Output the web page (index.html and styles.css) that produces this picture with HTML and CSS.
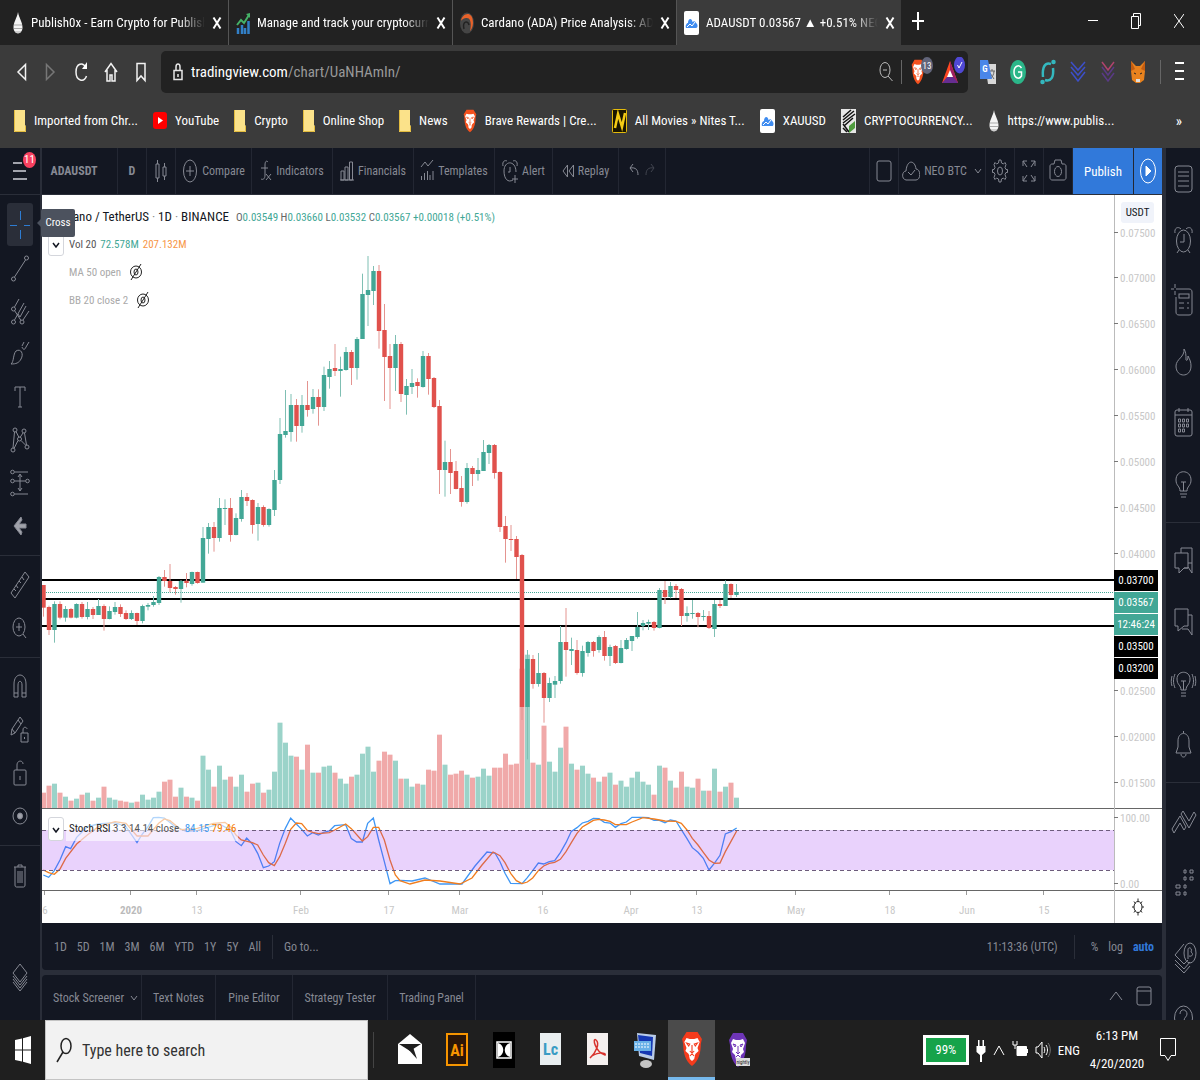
FILE: index.html
```html
<!DOCTYPE html>
<html lang="en">
<head>
  <meta charset="UTF-8" />
  <meta name="viewport" content="width=device-width, initial-scale=1.0" />
  <title>ADAUSDT 0.03567 ▲ +0.51% NEO BTC</title>
  <link rel="stylesheet" href="styles.css">
</head>
<body>
  <!-- shared symbols -->
  <svg class="defs" width="0" height="0" aria-hidden="true">
    <symbol id="drop" viewBox="0 0 10 24"><path d="M5 1C4 7 .5 11 .5 16.500a4.500 6 0 0 0 9 0C9.500 11 6 7 5 1z" fill="#f4f4f4"/><path d="M1 14h8M.8 17.500h8.400M2 21h6" stroke="#aaa" stroke-width="1"/></symbol>
    <symbol id="folder" viewBox="0 0 12 22"><path d="M0 0h11v15l1 1v6H0z" fill="#fbe28a"/><path d="M.5 0v21.500h11V16" fill="none" stroke="#e3bc3f"/></symbol>
    <symbol id="tv" viewBox="0 0 15 24"><rect width="15" height="24" rx="2" fill="#fff"/><path d="M2 17c-1-3 1-5 2-5 0-5 4-5 4.500-1 2-2 3.500 0 3.500 1 2 1 2 5 0 5z" fill="#3f8cf0"/><path d="M3 16l3-3 2 2 3-4" fill="none" stroke="#fff" stroke-width="1"/></symbol>
    <symbol id="lion" viewBox="0 0 20 36" preserveAspectRatio="none"><path d="M5 1h10l4 7-1 5c0 9-2 17-8 22C4 30 2 22 2 13L1 8z"/><path d="M5 7l3 1h4l3-1 2 4-2 6 1 3-3 3-1 5-2 2-2-2-1-5-3-3 1-3-2-6z" fill="#fff"/><path d="M5 12l3 1-1 2zM15 12l-3 1 1 2zM8 20l2 2 2-2M10 14v7M8 25l2-2 2 2" fill="none" stroke="currentColor" stroke-width="1"/></symbol>
    <symbol id="close" viewBox="0 0 10 14"><path d="M1.500 1.500l7 11M8.500 1.500l-7 11" stroke="#fff" stroke-width="2"/></symbol>
    <symbol id="hidden-eye" viewBox="0 0 14 16"><ellipse cx="7" cy="8" rx="5.500" ry="6"/><ellipse cx="7" cy="8" rx="2" ry="3"/><path d="M12 0L2 16"/></symbol>
    <symbol id="chev" viewBox="0 0 8 6"><path d="M1 1l3 4 3-4"/></symbol>
  </svg>

  <header class="browser">
    <div class="tabs">
      <div class="tab"><svg width="12" height="24"><use href="#drop"/></svg><span class="tab-title">Publish0x - Earn Crypto for Publish</span><button class="tab-close" aria-label="Close tab"><svg width="10" height="14"><use href="#close"/></svg></button></div>
      <div class="tab"><svg width="14" height="22" viewBox="0 0 14 22"><path d="M2 22v-6M6 22v-9M9 22v-6M12.500 22V9" stroke="#3280c8" stroke-width="2.500"/><path d="M1 13l4-5 3 3 5-8" fill="none" stroke="#45b267" stroke-width="2"/><path d="M10 2l4-1v5" fill="#45b267"/></svg><span class="tab-title">Manage and track your cryptocurr</span><button class="tab-close" aria-label="Close tab"><svg width="10" height="14"><use href="#close"/></svg></button></div>
      <div class="tab"><svg width="14" height="22" viewBox="0 0 14 22"><ellipse cx="7" cy="11" rx="7" ry="10.500" fill="#454545"/><path d="M1 9C2 1 13-2 13 11c0 4-2 7-3 8 1-4 2-14-4-13C3 6 1 9 1 9z" fill="#e8622a"/><path d="M4 17c-2-8 4-9 5-4" fill="none" stroke="#222" stroke-width="1.500"/></svg><span class="tab-title">Cardano (ADA) Price Analysis: ADA</span><button class="tab-close" aria-label="Close tab"><svg width="10" height="14"><use href="#close"/></svg></button></div>
      <div class="tab tab-active"><svg width="15" height="24"><use href="#tv"/></svg><span class="tab-title">ADAUSDT 0.03567 ▲ +0.51% NEO</span><button class="tab-close" aria-label="Close tab"><svg width="10" height="14"><use href="#close"/></svg></button></div>
      <button class="new-tab" aria-label="New tab"><svg width="12" height="18" viewBox="0 0 12 18"><path d="M6 0v18M0 9h12" stroke="#fff" stroke-width="2"/></svg></button>
      <div class="window-buttons">
        <button aria-label="Minimize"><svg width="10" height="16" viewBox="0 0 10 16"><path d="M0 7.500h10" stroke="#fff"/></svg></button>
        <button aria-label="Restore"><svg width="10" height="16" viewBox="0 0 10 16"><path d="M.5 3.500h7v12h-7zM2.500 3V.5h7v12H8" fill="none" stroke="#fff"/></svg></button>
        <button aria-label="Close"><svg width="10" height="16" viewBox="0 0 10 16"><path d="M0 1l10 14M10 1L0 15" stroke="#fff"/></svg></button>
      </div>
    </div>

    <div class="nav">
      <button aria-label="Back"><svg width="14" height="22" viewBox="0 0 14 22"><path d="M11.500 3.500v15L4 11z"/></svg></button>
      <button class="dim" aria-label="Forward"><svg width="14" height="22" viewBox="0 0 14 22"><path d="M2.500 3.500v15L10 11z"/></svg></button>
      <button aria-label="Reload"><svg width="14" height="22" viewBox="0 0 14 22"><path d="M11.500 6C9 1 2 2 2 11s8 11 10.500 4"/><path d="M13 1v7H8z" fill="#fff" stroke="none"/></svg></button>
      <button aria-label="Home"><svg width="14" height="22" viewBox="0 0 14 22"><path d="M1 11l6-8.500L13 11M3 9v11h3v-6h2v6h3V9"/></svg></button>
      <button aria-label="Bookmark"><svg width="14" height="22" viewBox="0 0 14 22"><path d="M3 2.500h8v17L7 15l-4 4.500z"/></svg></button>
      <div class="address">
        <svg width="10" height="18" viewBox="0 0 10 18" fill="none" stroke="#e6e6e6" stroke-width="1.500"><path d="M1 7.500h8v9H1zM3 7V4c0-4 4-4 4 0v3M5 11v3"/></svg>
        <span class="url">tradingview.com<em>/chart/UaNHAmIn/</em></span>
        <svg width="14" height="22" viewBox="0 0 14 22" fill="none" stroke="#bbb"><ellipse cx="6" cy="9" rx="5" ry="7.500"/><path d="M9 15l4.500 5M4 9h4"/></svg>
        <i class="bar"></i>
        <svg width="24" height="30" viewBox="0 0 24 30"><g fill="#f4511e" color="#f4511e"><use href="#lion" x="1" y="2" width="14" height="26"/></g><ellipse cx="17" cy="8.500" rx="6" ry="8.500" fill="#62657a"/><text x="17" y="12" class="badge-text">13</text></svg>
        <svg width="24" height="30" viewBox="0 0 24 30"><path d="M8 4L0 26h16z" fill="#ff4724"/><path d="M0 26h16l-3-6H5z" fill="#662d91"/><path d="M8 4l8 22-8-10z" fill="#9e1f63"/><path d="M8 13l-3 7h6z" fill="#fff"/><ellipse cx="17.500" cy="8" rx="5.500" ry="8.500" fill="#5048d5"/><path d="M15.500 8l1.500 3 3-6" fill="none" stroke="#fff"/></svg>
      </div>
      <div class="extensions">
        <svg width="16" height="26" viewBox="0 0 16 26"><path d="M5 5h11v20H8z" fill="#d8d8d8"/><path d="M9 12h6M12 10v2M14 12c0 4-2 6-4 8M10 14l4 6" stroke="#666" fill="none"/><path d="M0 1h8l4 19H0z" fill="#4a86e8"/><text x="5" y="13" class="ext-text">G</text></svg>
        <svg width="16" height="26" viewBox="0 0 16 26"><ellipse cx="8" cy="13" rx="8" ry="12" fill="#2bb689"/><path d="M11.500 9C9 5 4 7 4 13s5 8 7.500 4v-4H8" fill="none" stroke="#fff" stroke-width="1.500"/></svg>
        <svg width="16" height="26" viewBox="0 0 16 26" fill="none" stroke="#34b8bf" stroke-width="2.500"><path d="M11 5C5 3 2 8 3 18M5 21c6 2 9-3 8-12"/><circle cx="13.500" cy="3" r="1" fill="#34b8bf"/><circle cx="2.500" cy="23" r="1" fill="#34b8bf"/></svg>
        <svg width="16" height="26" viewBox="0 0 16 26" fill="none" stroke="#3d4fc9" stroke-width="1.500"><path d="M1 3l7 8 7-8M1 8l7 8 7-8M1 13l7 9 7-9"/></svg>
        <svg width="16" height="26" viewBox="0 0 16 26" fill="none" stroke-width="1.500"><path d="M2 3l6 8 6-8" stroke="#b0436d"/><path d="M2 8l6 8 6-8M2 14l6 8 6-8" stroke="#5a3a86"/></svg>
        <svg width="16" height="26" viewBox="0 0 16 26"><path d="M1 2l5 5h4l5-5v10l-1 9-4 3H6l-4-3-1-9z" fill="#e8821e"/><path d="M1 2l4 8-4 2zM15 2l-4 8 4 2z" fill="#c25c12"/><path d="M4 14l2 1M12 14l-2 1" stroke="#222"/><path d="M6 20h4v3H6z" fill="#ddd"/></svg>
        <i class="bar"></i>
        <button class="menu" aria-label="Menu"><svg width="9" height="20" viewBox="0 0 9 20"><path d="M0 2h9M0 10h9M0 18h9" stroke="#fff" stroke-width="2"/></svg></button>
      </div>
    </div>

    <nav class="bookmarks">
      <a href="#"><svg width="12" height="22"><use href="#folder"/></svg>Imported from Chr...</a>
      <a href="#"><svg width="14" height="18" viewBox="0 0 14 18"><rect width="14" height="17" rx="3" fill="#f00"/><path d="M5 5l5 3.500L5 12z" fill="#fff"/></svg>YouTube</a>
      <a href="#"><svg width="12" height="22"><use href="#folder"/></svg>Crypto</a>
      <a href="#"><svg width="12" height="22"><use href="#folder"/></svg>Online Shop</a>
      <a href="#"><svg width="12" height="22"><use href="#folder"/></svg>News</a>
      <a href="#"><svg class="orange" width="14" height="24"><use href="#lion"/></svg>Brave Rewards | Cre...</a>
      <a href="#"><svg width="15" height="24" viewBox="0 0 15 24"><rect x=".5" y=".5" width="14" height="23" rx="1" fill="#191500" stroke="#e4bb0b"/><path d="M3 19L6 5l4 13 3-14" fill="none" stroke="#f4cb15" stroke-width="2.500"/></svg>All Movies » Nites T...</a>
      <a href="#"><svg width="15" height="24"><use href="#tv"/></svg>XAUUSD</a>
      <a href="#"><svg width="15" height="24" viewBox="0 0 15 24"><rect width="15" height="24" fill="#e6e6e6"/><path d="M2 8l8-7M2 11l11-9M2 14l12-9M3 17l9-8M2 15l6 8M2 19l4 4" stroke="#111" stroke-width="1.500"/><path d="M8 17l6-5v7l-6 5z" fill="#4f9b3e"/></svg>CRYPTOCURRENCY...</a>
      <a href="#"><svg width="12" height="24"><use href="#drop"/></svg>https://www.publis...</a>
      <button class="more" aria-label="More bookmarks">»</button>
    </nav>
  </header>

  <main class="app">
    <aside class="tools">
      <button class="main-menu" aria-label="Main menu"><svg width="16" height="20" viewBox="0 0 16 20"><path d="M1 2h9M1 10h13M1 18h14" stroke="#a2a4ad" stroke-width="2"/></svg><span class="count">11</span></button>
      <div class="tool-list">
        <button class="selected" aria-label="Cross"><svg class="blue" viewBox="0 0 20 30"><path d="M10.500 1v9M10.500 20v9M0 15.500h7M14 15.500h6"/></svg></button>
        <button aria-label="Trend line"><svg viewBox="0 0 20 30"><circle cx="3.500" cy="26" r="2"/><circle cx="16.500" cy="5" r="2"/><path d="M4.500 24l11-17"/></svg></button>
        <button aria-label="Pitchfork"><svg viewBox="0 0 20 30"><circle cx="3.500" cy="13" r="2"/><circle cx="3.500" cy="26" r="2"/><circle cx="12" cy="26" r="2"/><path d="M4.500 11L9 3M4.500 14.500l6.500 10M4.500 24L14 7M8 18l2 3 6-11M13 24l6-9"/></svg></button>
        <button aria-label="Brush"><svg viewBox="0 0 20 30"><path d="M1 25c3-2 2-10 5-13 5-3 8 3 5 8-2 4-5 5-10 5zM12 8c1 3 3 3 4 0l3-5M14 3l-2 4"/></svg></button>
        <button aria-label="Text"><svg viewBox="0 0 20 30"><path d="M5 9V5h10v4M10 5v20M8 25h4"/></svg></button>
        <button aria-label="Patterns"><svg viewBox="0 0 20 30"><circle cx="5" cy="5" r="2"/><circle cx="14" cy="6" r="2"/><circle cx="9.500" cy="14" r="2"/><circle cx="3" cy="25" r="2"/><circle cx="17" cy="22" r="2"/><path d="M4.500 7L3 23M6 6.500l3 6M13 8l-3 4.500M14.500 8l2 12M8 15.500L4 23.500M11 15.500l5 5"/></svg></button>
        <button aria-label="Prediction"><svg viewBox="0 0 20 30"><circle cx="2.500" cy="4" r="1.800"/><circle cx="2.500" cy="13" r="1.800"/><circle cx="17.500" cy="13" r="1.800"/><circle cx="2.500" cy="26" r="1.800"/><path d="M4.500 4H18M4.500 13h11M4.500 26H18M10 7v16M8 9l2-3 2 3M8 20l2 3 2-3"/></svg></button>
        <button aria-label="Arrow"><svg class="solid" viewBox="0 0 20 30"><path d="M4 15l7-9 1 3-3 4h7v4H9l3 4-1 3z"/></svg></button>
        <hr>
        <button aria-label="Measure"><svg viewBox="0 0 20 30"><path d="M1 23L15 2l4 5L5 28zM4 19l2 2M6 15l2 3M9 11l2 2M12 7l2 3"/></svg></button>
        <button aria-label="Zoom in"><svg viewBox="0 0 20 30"><ellipse cx="9" cy="14" rx="6" ry="9"/><path d="M13 21l3 4M6 14h6M9 10v8"/></svg></button>
        <hr>
        <button aria-label="Magnet"><svg viewBox="0 0 20 30"><path d="M4 25V12c0-12 12-12 12 0v13h-4V13c0-5-4-5-4 0v12zM4 21h4M12 21h4"/></svg></button>
        <button aria-label="Stay in drawing mode"><svg viewBox="0 0 20 30"><path d="M1 20L2 14 10 2l3 4L5 18zM8 5l3 4M2 14l3 4M11 18h7v9h-7zM13 18v-3c0-4 4-3 4-1M14.500 22v2"/></svg></button>
        <button aria-label="Lock drawings"><svg viewBox="0 0 20 30"><rect x="4" y="12" width="12" height="15" rx="1"/><path d="M7 12V7c0-5 6-5 6-1M10 18v4"/></svg></button>
        <button aria-label="Hide drawings"><svg viewBox="0 0 20 30"><ellipse cx="10" cy="15" rx="7" ry="8"/><ellipse class="dot" cx="10" cy="15" rx="2.500" ry="3"/></svg></button>
        <hr>
        <button aria-label="Remove drawings"><svg viewBox="0 0 20 30"><path d="M4 7h12M8 7V5h4v2M5 7v18c0 2 1 2 2 2h6c1 0 2 0 2-2V7M8 11v12M10 11v12M12 11v12"/></svg></button>
        <button class="object-tree" aria-label="Object tree"><svg viewBox="0 0 20 30"><path d="M10 2l7 9-7 9-7-9zM3 14l7 9 7-9M3 17l7 9 7-9M3 20l7 9 7-9"/></svg></button>
      </div>
    </aside>

    <section class="center">
      <div class="topbar">
        <button class="w-symbol"><b>ADAUSDT</b></button>
        <button class="w-icon"><b>D</b></button>
        <button class="w-icon" aria-label="Candles"><svg width="12" height="26" viewBox="0 0 12 26"><path d="M1 6h3v14H1zM2.500 2v4M2.500 20v4M8 9h3v9H8zM9.500 5v4M9.500 18v4"/></svg></button>
        <button class="w-compare"><svg width="16" height="26" viewBox="0 0 16 26"><ellipse cx="8" cy="13" rx="6.500" ry="11"/><path d="M8 8v10M4 13h8"/></svg>Compare</button>
        <button class="w-tool"><svg width="12" height="26" viewBox="0 0 12 26"><path d="M8 4C6 2 5 4 5 7v10c0 4-2 5-4 4M1 10h7M6 16l5 6M11 16l-5 6"/></svg>Indicators</button>
        <button class="w-tool"><svg width="14" height="26" viewBox="0 0 14 26"><path d="M1 22v-9h3v9zM5 22V9h3v13zM9.500 22V4h3v18zM0 22h14"/></svg>Financials</button>
        <button class="w-tool"><svg width="14" height="26" viewBox="0 0 14 26"><path d="M1 9l4-5 3 4 5-6M1.500 22v-4M4.500 22v-7M7.500 22v-9M10 22v-5M13 22v-9"/></svg>Templates</button>
        <button class="w-alert"><svg width="16" height="26" viewBox="0 0 16 26"><path d="M11 22c-5 3-9-1-9-9 0-11 12-11 12 1M1 8c-1-5 2-6 4-5M15 8c1-5-2-6-4-5M8 9v5H6M10 21h6M13 17v8"/></svg>Alert</button>
        <button class="w-replay"><svg width="12" height="26" viewBox="0 0 12 26"><path d="M5.500 7v12L1 13zM11.500 7v12L7 13z"/></svg>Replay</button>
        <div class="w-undo"><button aria-label="Undo"><svg width="12" height="20" viewBox="0 0 12 20"><path d="M5 4L2 8l3 4M2 8c6-1 8 2 8 7"/></svg></button><button class="off" aria-label="Redo"><svg width="12" height="20" viewBox="0 0 12 20"><path d="M7 4l3 4-3 4M10 8c-6-1-8 2-8 7"/></svg></button></div>
        <span class="fill"></span>
        <button class="w-icon" aria-label="Layout"><svg width="16" height="22" viewBox="0 0 16 22"><rect x="1" y="1" width="14" height="20" rx="2"/></svg></button>
        <button class="w-layout"><svg width="18" height="22" viewBox="0 0 18 22"><path d="M4 20C-1 19 0 11 4 11 5-1 13 0 14 9c5 0 5 11 0 11zM6 12l3 3 4-5"/></svg>NEO BTC<svg class="caret" width="8" height="6"><use href="#chev"/></svg></button>
        <button class="w-icon" aria-label="Settings"><svg width="16" height="26" viewBox="0 0 16 26"><path d="M6.500 5L7 2h2l.5 3 2 1L13 4.500l1 2-1 3 1 2h1.500v3H14l-1 2 1 3-1 2-1.500-1.500-2 1L9 24H7l-.5-3-2-1L3 21.500l-1-2 1-3-1-2H.5v-3H2l1-2-1-3 1-2L4.500 6z"/><ellipse cx="8" cy="13" rx="2.500" ry="4"/></svg></button>
        <button class="w-icon" aria-label="Fullscreen"><svg width="14" height="22" viewBox="0 0 14 22"><path d="M1 6V1h4M1 1l4 6M13 6V1H9M13 1L9 7M1 16v5h4M1 21l4-6M13 16v5H9M13 21l-4-6"/></svg></button>
        <button class="w-icon" aria-label="Snapshot"><svg width="18" height="24" viewBox="0 0 18 24"><path d="M3 5h2l1-4h6l1 4h2c1 0 2 1 2 2v12c0 1-1 2-2 2H3c-1 0-2-1-2-2V7c0-1 1-2 2-2z"/><ellipse cx="9" cy="12.500" rx="3.500" ry="5"/></svg></button>
        <button class="publish">Publish</button>
        <button class="play" aria-label="Go live"><svg width="18" height="26" viewBox="0 0 18 26"><ellipse cx="9" cy="13" rx="7.500" ry="12"/><path d="M7 8l5 5-5 5z" fill="#fff"/></svg></button>
      </div>

      <div class="chart">
        <svg id="plot" width="1120" height="728" viewBox="42 195 1120 728">
          <g id="volume"></g>
          <g stroke="#000" stroke-width="2"><path d="M42 580h1072M42 599h1072M42 626h1072"/></g>
          <path d="M42 592.500h1072" stroke="#42a796" stroke-dasharray="1 1"/>
          <g id="candles"></g>
          <g id="stoch" fill="none" stroke-width="1.300"></g>
          <rect x="42" y="830" width="1072" height="40" fill="rgba(145, 30, 240, .2)"/>
          <path d="M42 830.500h1072M42 870.500h1072" stroke="#6d5c7c" stroke-dasharray="4 3"/>
          <path d="M42 808.500h1120M42 890.500h1120" stroke="#666"/>
          <path d="M1114.500 195v728" stroke="#bbb"/>
          <g id="axis"></g>
        </svg>

        <div class="legend">
          <div class="legend-title">Cardano / TetherUS <i>·</i> 1D <i>·</i> BINANCE
            <span class="ohlc">O<b>0.03549</b> H<b>0.03660</b> L<b>0.03532</b> C<b>0.03567</b> <b>+0.00018 (+0.51%)</b></span>
          </div>
          <div class="legend-row">Vol 20 <span class="green">72.578M</span> <span class="orange-text">207.132M</span></div>
          <div class="legend-row faded">MA 50 open <svg width="14" height="16"><use href="#hidden-eye"/></svg></div>
          <div class="legend-row faded">BB 20 close 2 <svg width="14" height="16"><use href="#hidden-eye"/></svg></div>
        </div>
        <button class="fold fold-top" aria-label="Collapse"><svg width="8" height="6"><use href="#chev"/></svg></button>
        <div class="stoch-legend">
          <button class="fold" aria-label="Collapse"><svg width="8" height="6"><use href="#chev"/></svg></button>
          <div class="stoch-label">Stoch RSI <span class="grey">3 3 14 14 close</span> <span class="k">84.15</span> <span class="d">79.46</span></div>
        </div>
        <div class="price-tags">
          <span>0.03700</span><span class="now">0.03567</span><span class="now">12:46:24</span><span>0.03500</span><span>0.03200</span>
        </div>
        <button class="currency">USDT</button>
        <button class="axis-settings" aria-label="Axis settings"><svg width="14" height="20" viewBox="0 0 14 20"><ellipse cx="7" cy="10" rx="4" ry="5.500"/><path d="M7 1.500v3M7 15.500v3M1 10h2M11 10h2M3 4.500l1.500 2M11 4.500l-1.500 2M3 15.500l1.500-2M11 15.500l-1.500-2"/></svg></button>
      </div>

      <div class="ranges">
        <button>1D</button><button>5D</button><button>1M</button><button>3M</button><button>6M</button><button>YTD</button><button>1Y</button><button>5Y</button><button>All</button>
        <i class="bar"></i>
        <button>Go to...</button>
        <span class="fill"></span>
        <button>11:13:36 (UTC)</button>
        <i class="bar bar-wide"></i>
        <button>%</button><button>log</button><button class="auto">auto</button>
      </div>

      <div class="panels">
        <button class="p-first">Stock Screener <svg class="caret" width="8" height="6"><use href="#chev"/></svg></button>
        <button class="p-notes">Text Notes</button>
        <button class="p-pine">Pine Editor</button>
        <button class="p-tester">Strategy Tester</button>
        <button class="p-trading">Trading Panel</button>
        <span class="fill"></span>
        <button class="p-icon" aria-label="Open panel"><svg width="14" height="20" viewBox="0 0 14 20"><path d="M1 14l6-8 6 8"/></svg></button>
        <button class="p-icon" aria-label="Maximize panel"><svg width="16" height="20" viewBox="0 0 16 20"><rect x="1" y="1" width="14" height="18" rx="2"/><path d="M1 5h14"/></svg></button>
      </div>
    </section>

    <aside class="widgets">
      <button aria-label="Watchlist"><svg viewBox="0 0 24 32"><rect x="4" y="3" width="17" height="26" rx="3"/><path d="M7 9h11M7 13h11M7 18h11M7 23h11"/></svg></button>
      <button aria-label="Alerts"><svg viewBox="0 0 24 32"><ellipse cx="12.500" cy="17" rx="7" ry="11"/><path d="M13 10v8H9M4 9c-1-5 3-7 6-4M21 9c1-5-3-7-6-4M8 26l-2 3M17 26l2 3"/></svg></button>
      <button aria-label="Data window"><svg viewBox="0 0 24 32"><path d="M5 12v15c0 2 1 3 3 3h10c2 0 3-1 3-3V7c0-2-1-3-3-3H8M4-1v4M4 6v4M0 4h3M5 4h3"/><rect x="8" y="9" width="10" height="4"/><path d="M8 18h5M8 23h5M16 18h2M16 23h2"/></svg></button>
      <button aria-label="Hotlist"><svg viewBox="0 0 24 32"><path d="M13 3c1 8-8 10-8 17 0 12 15 12 15 0 0-4-1-6-3-10 0 4-1 5-2 4 0-5 0-8-2-11z"/></svg></button>
      <button aria-label="Calendar"><svg viewBox="0 0 24 32"><rect x="4" y="3" width="17" height="26" rx="2"/><path d="M4 8h17M8 1v4M17 1v4"/><path d="M7.500 12h2v3h-2zM11.500 12h2v3h-2zM15.500 12h2v3h-2zM7.500 17h2v3h-2zM11.500 17h2v3h-2zM15.500 17h2v3h-2zM7.500 22h2v3h-2zM11.500 22h2v3h-2z"/></svg></button>
      <button aria-label="Ideas"><svg viewBox="0 0 24 32"><path d="M9 23c0-5-4-5-4-11 0-11 15-11 15 0 0 6-4 6-4 11zM9 26h7M10 29h5M10 14h5M12.500 14v9"/></svg></button>
      <hr>
      <button aria-label="Public chats"><svg viewBox="0 0 24 32"><path d="M4 8h13v15h-4l-5 5v-5H4zM10 8V3h11v15h-4M17 23h-4M17 22l4 6V18"/></svg></button>
      <button aria-label="Private chats"><svg viewBox="0 0 24 32"><path d="M4 3h13v17h-4l-6 5v-5H4zM17 9h4v20l-4-6h-6"/></svg></button>
      <button aria-label="Ideas stream"><svg viewBox="0 0 24 32"><path d="M10 23c0-5-4-5-4-11 0-9 13-9 13 0 0 6-4 6-4 11zM10 26h5M10 29h5M10 14h5M12.500 14v9M4 7c-2 5-2 9 0 14M1 9c-1 4-1 7 0 10M21 7c2 5 2 9 0 14M24 9c1 4 1 7 0 10"/></svg></button>
      <button aria-label="Notifications"><svg viewBox="0 0 24 32"><path d="M5 25h15l-2-6v-6c0-10-11-10-11 0v6zM10 26c0 4 5 4 5 0M12.500 5V3"/></svg></button>
      <hr>
      <button aria-label="Order panel"><svg viewBox="0 0 24 32"><path d="M1 24L9 11l6 11-2 3-4-7-6 10zM10 9l2-3 6 10 5-9 2 3-7 13z"/></svg></button>
      <button aria-label="DOM"><svg viewBox="0 0 24 32"><path d="M13 4h2v3h-2zM19 4h3v3h-3zM13 11h2v3h-2zM19 11h3v3h-3zM5 19h4v3H5zM13 19h2v3h-2zM5 26h4v3H5zM13 26h2v3h-2z"/></svg></button>
      <button class="beta" aria-label="Object tree"><svg viewBox="0 0 24 32"><path d="M13 3L4 14l9 9 4-4M4 19l9 9 6-7M4 23l9 9 6-7"/><ellipse cx="19" cy="12" rx="6" ry="10"/><path d="M17 18V9c0-4 5-2 3 2 3 2 1 5-2 4"/></svg></button>
      <button aria-label="Help"><svg viewBox="0 0 24 32"><ellipse cx="12.500" cy="16" rx="9" ry="12"/><path d="M9 12c0-6 7-5 7 0 0 3-3 3-3 7M13 22v2"/></svg></button>
    </aside>
  </main>

  <footer class="taskbar">
    <button class="start" aria-label="Start"><svg width="16" height="28" viewBox="0 0 16 28" fill="#fff"><path d="M0 4l7-1.500v11H0zM8 2.200L16 0v13.500H8zM0 14.500h7v11L0 24zM8 14.500h8V28l-8-2.200z"/></svg></button>
    <label class="search"><svg width="16" height="26" viewBox="0 0 16 26" fill="none" stroke="#222" stroke-width="1.500"><ellipse cx="10" cy="9" rx="5" ry="7.500"/><path d="M7 15L1 25"/></svg><input type="text" placeholder="Type here to search" aria-label="Type here to search"></label>
    <i class="bar"></i>
    <div class="apps">
      <button aria-label="Mail"><svg width="24" height="36" viewBox="0 0 24 36"><path d="M0 12L12 2l12 10v20H0z" fill="#fff"/><path d="M1 12h22L12 19z" fill="#1f1f1f"/><path d="M10 17l9 10-4-12z" fill="#1f1f1f"/></svg></button>
      <button aria-label="Illustrator"><svg width="22" height="34" viewBox="0 0 22 34"><rect x="1" y="1" width="20" height="31" fill="#2b1608" stroke="#f79500" stroke-width="2"/><text x="11" y="23" class="ai-text">Ai</text></svg></button>
      <button aria-label="Dolby"><svg width="22" height="36" viewBox="0 0 22 36"><path d="M0 0h22v36H0z"/><path d="M4 10h14v16H4z" fill="none" stroke="#fff" stroke-width="1.500"/><path d="M5 11c7 2 7 12 0 14zM17 11c-7 2-7 12 0 14z" fill="#fff"/></svg></button>
      <button aria-label="LiveCode"><svg width="22" height="34" viewBox="0 0 22 34"><path d="M0 0h21v32H0z" fill="#e9eef0"/><text x="10.500" y="22" class="lc-text">Lc</text></svg></button>
      <button aria-label="Acrobat"><svg width="22" height="34" viewBox="0 0 22 34"><path d="M0 0h21v32H0z" fill="#f5f0ef"/><path d="M3 25C9 20 13 10 9 7s-1 12 9 15c2-3-10-3-15 3z" fill="none" stroke="#d8322c" stroke-width="1.500"/></svg></button>
      <button aria-label="Remote desktop"><svg width="24" height="36" viewBox="0 0 24 36"><path d="M4 1l19 2-2 25-15-4z" fill="#b9cce8"/><path d="M5 3l15 2-1 19-12-3z" fill="#1538b4"/><path d="M1 9h17v10H1z" fill="#69b1e8"/><path d="M2 12h15M2 15h15" stroke="#fff" stroke-dasharray="2 1"/><ellipse cx="13" cy="32" rx="6" ry="4" fill="#c4c4c4"/></svg></button>
      <button class="app-active" aria-label="Brave"><svg class="red" width="22" height="36"><use href="#lion"/></svg></button>
      <button aria-label="Brave Nightly"><svg class="purple" width="22" height="36" viewBox="0 0 22 36"><use href="#lion" width="20" height="36"/><rect x="8" y="26" width="14" height="8" fill="#ddd"/><text x="15" y="32" class="nightly">nightly</text></svg></button>
    </div>
    <span class="fill"></span>
    <div class="tray">
      <span class="battery">99%</span>
      <svg width="10" height="24" viewBox="0 0 10 24" fill="#fff"><path d="M2 2h1.500v6h3V2H8v6h1.500v6L6 17v7H4v-7L.5 14V8H2z"/></svg>
      <svg width="12" height="12" viewBox="0 0 12 12" fill="none" stroke="#fff"><path d="M1 11l5-9 5 9"/></svg>
      <svg width="16" height="20" viewBox="0 0 16 20" fill="none" stroke="#fff"><path d="M5 6.500h9.500v9H5z" fill="#fff"/><path d="M1 1v4h4V1M3 5v4M15.500 9v4"/></svg>
      <svg width="16" height="20" viewBox="0 0 16 20" fill="none" stroke="#fff"><path d="M1 7h2l4-5v16l-4-5H1zM9 7c1 2 1 4 0 6M11 5c2 3 2 7 0 10" /><path d="M13 3c3 4 3 10 0 14" stroke="#777"/></svg>
      <span class="lang">ENG</span>
      <div class="clock"><span>6:13 PM</span><span>4/20/2020</span></div>
      <svg width="16" height="26" viewBox="0 0 16 26" fill="none" stroke="#fff"><path d="M.5 1.500h15v17H11l-3 5-3-5H.500z"/></svg>
    </div>
  </footer>

  <script src="chart.js"></script>
</body>
</html>
```
FILE: styles.css
```css
* { box-sizing: border-box; }
body {
  margin: 0;
  height: 100vh;
  display: flex;
  flex-direction: column;
  background: #131722;
  font-family: "Roboto Condensed", "Open Sans Condensed", Lato, sans-serif;
  font-size: 12px;
  overflow-x: hidden;
}
button {
  padding: 0;
  border: 0;
  background: none;
  font: inherit;
  color: inherit;
  cursor: pointer;
}
svg { flex: none; }
hr { border: 0; margin: 0; }
.defs { position: absolute; }
.fill { flex: 1; }
.bar { width: 1px; flex: none; }

/* browser */
.browser { background: #3b3b3b; color: #fff; }
.tabs {
  display: flex;
  height: 45px;
  background: #222;
  padding-left: 5px;
}
.tab {
  width: 224px;
  display: flex;
  align-items: center;
  gap: 7px;
  padding: 0 6px 0 7px;
  border-right: 1px solid #555;
}
.tab-active { background: #3b3b3b; border-right: 0; }
.tab-title {
  flex: 1;
  overflow: hidden;
  white-space: nowrap;
  font-size: 13px;
  -webkit-mask-image: linear-gradient(to right, #000 85%, transparent);
  mask-image: linear-gradient(to right, #000 85%, transparent);
}
.tab-close { display: flex; }
.new-tab { width: 34px; }
.window-buttons { margin-left: auto; display: flex; }
.window-buttons button { width: 43px; }

.nav {
  display: flex;
  align-items: center;
  height: 54px;
  padding-left: 6px;
}
.nav > button { width: 30px; display: flex; justify-content: center; }
.nav > button svg { fill: none; stroke: #f2f2f2; stroke-width: 1.5; }
.nav > .dim svg { stroke: #777; }
.address {
  flex: 1;
  height: 42px;
  margin-left: 5px;
  padding: 0 2px 0 12px;
  display: flex;
  align-items: center;
  gap: 8px;
  background: #222;
  border-radius: 5px;
}
.url { flex: 1; font-size: 15px; }
.url em { font-style: normal; color: #999; }
.address .bar, .extensions .bar { height: 24px; background: #666; }
.badge-text { font-size: 9px; fill: #fff; text-anchor: middle; }
.ext-text { font-size: 9px; font-weight: bold; fill: #fff; text-anchor: middle; }
.extensions {
  display: flex;
  align-items: center;
  gap: 14px;
  padding: 0 16px 0 12px;
}

.bookmarks {
  display: flex;
  align-items: center;
  height: 49px;
  padding: 0 18px 6px 14px;
  gap: 15px;
  font-size: 13px;
}
.bookmarks a {
  display: flex;
  align-items: center;
  gap: 8px;
  color: #fff;
  text-decoration: none;
  white-space: nowrap;
}
.bookmarks .more { margin-left: auto; font-size: 15px; }
.orange { fill: #f4511e; color: #f4511e; }
.red { fill: #f53b1c; color: #f53b1c; }
.purple { fill: #6e35b7; color: #6e35b7; }

/* trading app */
.app {
  flex: 1;
  min-height: 0;
  display: flex;
  background: #2a2e39;
  color: #868993;
}
.app svg { fill: none; stroke: currentColor; }
.tools {
  width: 40px;
  display: flex;
  flex-direction: column;
  background: #131722;
  margin-right: 2px;
}
.main-menu {
  position: relative;
  height: 47px;
  border-bottom: 1px solid #2a2e39;
}
.main-menu svg { vertical-align: middle; }
.count {
  position: absolute;
  left: 23px;
  top: 4px;
  width: 13px;
  height: 16px;
  border-radius: 50%;
  background: #f7405f;
  color: #fff;
  font-size: 11px;
  line-height: 16px;
}
.tool-list {
  flex: 1;
  display: flex;
  flex-direction: column;
  padding-top: 8px;
}
.tool-list button {
  height: 43px;
  margin: 0 7px;
  display: flex;
  align-items: center;
  justify-content: center;
}
.tool-list svg { width: 20px; height: 30px; }
.tool-list hr { height: 1px; margin: 8px 0 7px; background: #2a2e39; }
.tool-list .selected { background: #2a2e39; border-radius: 3px; }
.tool-list .blue { stroke: #2e7cd1; }
.tool-list .solid, .tool-list .dot { fill: #a0a2aa; }
.tool-list .object-tree { margin-top: auto; margin-bottom: 22px; }

.center {
  flex: 1;
  min-width: 0;
  display: flex;
  flex-direction: column;
}
.topbar {
  display: flex;
  height: 46px;
  margin-bottom: 1px;
  background: #131722;
}
.topbar > button, .w-undo {
  display: flex;
  align-items: center;
  justify-content: center;
  gap: 4px;
  border-right: 1px solid #232733;
  white-space: nowrap;
}
.w-symbol { width: 76px; padding-right: 11px; }
.w-icon { width: 29px; }
.w-compare { width: 76px; }
.w-tool { width: 81px; }
.w-alert { width: 58px; }
.w-replay { width: 66px; }
.w-undo { width: 47px; }
.off { opacity: .4; }
.topbar .fill { border-right: 1px solid #232733; }
.w-layout { width: 87px; }
.topbar .publish { width: 61px; background: #3179da; color: #fff; font-size: 13px; }
.topbar .play { width: 28px; background: #3179da; color: #fff; border: 0; }

.chart {
  position: relative;
  flex: 1;
  min-height: 0;
  background: #fff;
  overflow: hidden;
}
#plot { display: block; stroke: none; }
.axis-text { font-size: 11px; fill: #c8c8c8; stroke: none; }
.axis-mid { text-anchor: middle; }
.axis-bold { font-weight: bold; fill: #bbb; }
.legend {
  position: absolute;
  left: 7px;
  top: 8px;
  color: #555;
}
.legend-title { font-size: 13px; line-height: 27px; color: #131722; white-space: nowrap; }
.legend-title i { font-style: normal; color: #888; }
.ohlc { font-size: 11px; line-height: 1; color: #666; margin-left: 4px; }
.ohlc b { font-weight: normal; color: #42a796; }
.legend-row {
  display: flex;
  align-items: center;
  gap: 4px;
  height: 28px;
  padding-left: 20px;
  font-size: 11px;
}
.legend-row.faded { color: #aaa; }
.legend-row svg { margin-left: 4px; color: #222; }
.green { color: #42a796; }
.orange-text { color: #f79646; }
.fold {
  width: 16px;
  height: 24px;
  background: #fff;
  border: 1px solid #d4d6dc;
  border-radius: 3px;
  color: #131722;
  stroke-width: 1.5;
}
.fold-top { position: absolute; left: 6px; top: 37px; }
.stoch-legend {
  position: absolute;
  left: 6px;
  top: 621px;
  display: flex;
  align-items: center;
  gap: 2px;
}
.stoch-label {
  padding: 6px 2px 6px 3px;
  background: rgba(255, 255, 255, .6);
  font-size: 11px;
  color: #222;
}
.grey { color: #555; }
.k { color: #3f9bf0; margin-left: 3px; }
.d { color: #f57c00; }
.price-tags {
  position: absolute;
  right: 4px;
  top: 375px;
  width: 44px;
  display: flex;
  flex-direction: column;
  gap: 1px;
}
.price-tags span {
  height: 21px;
  line-height: 21px;
  background: #000;
  color: #fff;
  font-size: 11px;
  text-align: center;
}
.price-tags .now { background: #42a796; }
.currency {
  position: absolute;
  right: 8px;
  top: 7px;
  width: 33px;
  height: 21px;
  border-radius: 3px;
  background: #f0f3fa;
  color: #131722;
  font-size: 11px;
}
.axis-settings { position: absolute; right: 17px; bottom: 3px; color: #222; }

.ranges {
  display: flex;
  align-items: center;
  height: 47px;
  padding: 0 8px 0 12px;
  gap: 10px;
  background: #131722;
  border-radius: 0 0 4px 4px;
}
.ranges .bar { height: 24px; background: #2a2e39; margin: 0 1px; }
.ranges .bar-wide { margin: 0 6px; }
.ranges .auto { color: #3179da; font-weight: bold; }

.panels {
  display: flex;
  height: 45px;
  margin-top: 5px;
  background: #131722;
  border-radius: 4px 4px 0 0;
}
.panels button { border-right: 1px solid #232733; white-space: nowrap; }
.caret { margin-left: 3px; vertical-align: middle; }
.p-first { width: 100px; padding-left: 8px; }
.p-notes { width: 74px; }
.p-pine { width: 77px; }
.p-tester { width: 95px; }
.p-trading { width: 88px; }
.panels .p-icon { width: 28px; border: 0; }
.panels .p-icon:last-child { margin-right: 4px; }

.widgets {
  width: 34px;
  margin-left: 4px;
  display: flex;
  flex-direction: column;
  background: #131722;
  overflow: hidden;
}
.widgets button {
  flex: none;
  height: 61px;
  display: flex;
  align-items: center;
  justify-content: center;
}
.widgets svg { width: 24px; height: 32px; overflow: visible; }
.widgets hr { height: 1px; flex: none; margin: 8px 0 7px; background: #2a2e39; }
.widgets .beta { margin-top: 14px; }

/* the tooltip sits over the chart corner */
.selected { position: relative; }
.selected::before {
  content: "Cross";
  position: absolute;
  left: 34px;
  top: 6px;
  width: 34px;
  height: 28px;
  line-height: 28px;
  text-align: center;
  background: #4c525e;
  color: #fff;
  border-radius: 2px;
  font-size: 11px;
  z-index: 2;
}
.selected::after {
  content: "";
  position: absolute;
  left: 30px;
  top: 16px;
  border: 4px solid transparent;
  border-right-color: #4c525e;
  border-left: 0;
}

/* taskbar */
.taskbar {
  display: flex;
  height: 60px;
  background: #1f1f1f;
  color: #fff;
}
.start { width: 45px; display: flex; align-items: center; justify-content: center; }
.search {
  width: 323px;
  display: flex;
  align-items: center;
  gap: 10px;
  padding: 0 10px;
  background: #f2f2f2;
  border: 1px solid #c4c4c4;
}
.search input {
  flex: 1;
  min-width: 0;
  padding: 0;
  border: 0;
  background: none;
  font: inherit;
  font-size: 16px;
  color: #333;
}
.search input::placeholder { color: #333; opacity: 1; }
.taskbar .bar { height: 36px; margin: 12px 12px 0 5px; background: #444; }
.apps { display: flex; }
.apps button {
  width: 47px;
  display: flex;
  align-items: center;
  justify-content: center;
}
.apps .app-active { background: #4b4b4b; border-bottom: 3px solid #76b9ed; }
.ai-text { font-size: 16px; font-weight: bold; fill: #f79500; text-anchor: middle; }
.lc-text { font-size: 16px; font-weight: bold; fill: #3a9cc4; text-anchor: middle; }
.nightly { font-size: 5px; fill: #222; text-anchor: middle; }
.tray { display: flex; align-items: center; gap: 7px; padding-right: 24px; }
.battery {
  width: 46px;
  height: 30px;
  line-height: 24px;
  border: 3px solid #fff;
  background: #16a34a;
  text-align: center;
  font-size: 13px;
}
.lang { font-size: 13px; }
.clock {
  width: 60px;
  margin-right: 6px;
  display: flex;
  flex-direction: column;
  align-items: center;
  font-size: 13px;
  line-height: 28px;
}
```
FILE: chart.js
```javascript
// each bar: [up, bodyTop, bodyBottom, wickTop, wickBottom], three units to a pixel
const segments = [
  { base: 340, bars: [
    [0,735,803,735,830],[0,801,870,797,885],[1,792,870,784,908],[0,792,833,784,838],[1,807,833,798,845],
    [0,807,833,804,835],[1,792,833,790,835],[0,792,831,786,836],[1,807,831,786,838],[0,807,825,801,837],
    [1,798,825,777,825],[0,798,837,793,872],[1,813,837,799,838],[1,801,816,786,824],[0,801,822,793,831],
    [0,819,837,811,840],[1,819,837,811,840],[0,819,843,818,855],[1,798,843,794,850],[1,795,800,789,811],
    [1,786,795,768,800],[1,711,789,708,795],[0,711,723,690,740],[0,723,744,672,757],[0,741,747,738,764],
    [1,723,747,720,788],[0,722,729,699,742],[1,696,732,695,737],[0,696,729,695,731],[1,594,728,561,728],
    [1,561,597,549,641],[0,561,594,546,635],[1,504,594,474,605],[1,504,507,478,555],[0,504,585,474,605],
    [1,534,585,520,586],[1,471,537,450,545],[0,471,483,459,498],[0,480,555,478,581],[1,501,552,489,602],
    [0,501,555,496,560],[1,507,555,505,560],[1,420,510,390,528],[1,282,420,234,432],[1,273,285,150,293],
    [1,195,276,162,305],[0,195,258,177,305]
  ] },
  { base: 240, bars: [
    [1,495,558,465,578],[0,495,510,423,530],[1,471,507,447,521],[0,471,501,448,557],[1,405,501,380,513],
    [1,387,411,363,446],[0,384,393,312,408],[1,387,393,350,470],[1,336,390,321,392],[0,336,384,330,435],
    [1,297,384,291,419],[1,162,297,101,297],[1,150,165,48,258],[1,93,153,78,195],[0,93,273,75,326],
    [0,270,351,192,483],[0,348,384,312,507],[1,312,384,285,453],[0,312,462,306,486],[1,438,465,417,524],
    [1,429,441,387,462],[0,426,438,415,473],[1,348,441,333,443],[0,348,417,339,464],[0,414,501,411,504],
    [0,498,690,480,762],[1,666,690,602,770],[0,666,699,627,762],[0,693,747,663,748],[0,744,786,708,800],
    [1,684,786,669,791],[0,684,702,678,738],[1,690,702,654,722],[1,636,693,600,693],[1,615,639,612,672],
    [0,615,699,612,716],[0,696,861,694,876],[0,858,897,828,968],[0,897,900,855,933],[0,897,951,888,1017]
  ] },
  { base: 540, bars: [
    [0,45,501,42,540],[1,357,501,330,658],[0,357,432,345,446],[1,399,432,339,440],[0,399,474,396,548],
    [1,429,474,413,486],[1,423,434,408,474],[1,306,423,258,431],[0,306,330,204,410],[1,327,333,293,375],
    [0,330,399,300,404],[1,333,399,317,410],[1,306,339,303,350],[0,306,333,303,350],[1,291,330,286,338],
    [0,291,348,273,362],[1,321,348,314,378],[0,318,369,315,372],[1,324,369,300,370],[1,300,327,294,329],
    [1,288,303,288,333],[1,261,291,216,296],[1,249,258,240,271],[1,246,251,239,270],[0,246,264,243,272],
    [1,150,264,144,265],[0,150,171,123,192],[1,138,171,126,175],[0,138,150,132,174],[0,147,228,144,258],
    [1,219,228,199,245],[1,219,222,180,236],[0,219,231,216,262],[1,228,230,210,242],[0,228,264,213,267],
    [1,192,267,180,291],[0,192,198,180,204],[1,132,198,121,198],[0,132,165,130,174],[1,156,165,132,171]
  ] }
];

// bar heights, three units to a pixel
const volumes = [
  46,67,73,46,34,22,28,40,46,22,31,64,31,25,22,19,16,19,40,25,31,49,79,85,34,61,34,31,22,157,115,64,
  127,85,94,64,100,49,73,76,46,55,109,256,196,157,154,115,190,106,106,124,127,106,88,73,94,100,163,184,
  109,142,169,160,142,88,88,64,73,70,115,112,220,130,100,103,112,100,91,94,118,97,121,121,163,130,133,
  418,460,136,130,247,139,109,181,244,133,115,127,103,91,79,94,106,70,82,64,91,109,79,70,40,127,121,82,
  61,109,64,61,88,52,52,118,49,64,76,31
];

const bars = segments.flatMap(s => s.bars.map(b => [b[0], ...b.slice(1).map(v => s.base + v / 3)]));
const barX = i => 43.5 + i * 5.5;

document.getElementById('volume').innerHTML = bars.map((b, i) => {
  const h = volumes[i] / 3;
  return `<rect x="${barX(i) - 2.5}" y="${808 - h}" width="5" height="${h}" fill="${b[0] ? '#9bd3c9' : '#f0a9a9'}"/>`;
}).join('');

document.getElementById('candles').innerHTML = bars.map((b, i) => {
  const x = barX(i);
  const body = b[0] ? '#42a796' : '#e0514c';
  const wick = b[0] ? '#7fbfb3' : '#e49490';
  return `<path d="M${x} ${b[3]}V${b[4]}" stroke="${wick}"/>` +
    `<rect x="${x - 2.2}" y="${b[1]}" width="4.400" height="${Math.max(b[2] - b[1], 1)}" fill="${body}"/>`;
}).join('');

const left = pts => pts.map(([x, y]) => [x / 3, 640 + y / 3]);
const right = pts => pts.map(([x, y]) => [500 + x / 3, 540 + y / 3]);

const kLine = [
  ...left([[130,705],[146,712],[163,692],[180,660],[197,620],[212,626],[230,592],[262,560],[295,552],[345,548],
    [378,560],[411,608],[427,582],[444,560],[460,533],[476,532],[493,534],[526,560],[560,575],[592,572],[658,552],
    [691,570],[708,605],[724,617],[740,594],[757,612],[773,640],[790,683],[806,678],[823,665],[839,610],[856,565],
    [872,534],[889,552],[905,568],[922,588],[938,578],[955,585],[971,577],[988,573],[1004,557],[1037,554],
    [1054,596],[1070,606],[1087,606],[1103,550],[1120,534],[1136,600],[1153,665],[1170,731],[1186,722],[1200,721]]),
  [412,881],[425,878],[440,884],[462,884],[475,866],[487,852],[495,853],
  ...right([[0,965],[15,1000],[32,1030],[66,1031],[82,1013],[98,992],[115,969],[131,972],[148,965],[164,962],
    [181,938],[198,908],[214,874],[231,863],[247,849],[264,844],[280,835],[297,836],[313,847],[330,849],[346,862],
    [363,851],[379,846],[396,832],[429,832],[445,833],[462,841],[478,841],[495,848],[511,840],[528,843],[544,869],
    [561,896],[577,923],[594,937],[610,955],[627,990],[643,970],[660,946],[676,882],[693,875],[710,864]])
];
const dLine = [
  ...left([[130,690],[146,698],[163,703],[180,687],[197,655],[230,612],[262,585],[295,560],[345,545],[378,550],
    [411,588],[444,588],[476,550],[493,537],[510,542],[543,569],[592,565],[640,550],[675,547],[691,560],[708,585],
    [724,600],[757,608],[773,615],[790,645],[806,668],[823,677],[839,650],[856,610],[872,568],[889,549],[905,551],
    [922,571],[938,577],[955,581],[988,578],[1004,570],[1037,552],[1054,566],[1087,603],[1103,590],[1120,562],
    [1136,562],[1153,600],[1170,660],[1186,705],[1200,722]]),
  [410,884],[425,880],[440,881],[460,884],[472,878],[482,865],[493,852],
  ...right([[0,947],[15,968],[32,1000],[49,1022],[66,1031],[82,1026],[98,1014],[115,992],[131,978],[148,970],
    [164,967],[181,958],[198,935],[214,908],[231,880],[247,861],[264,851],[280,841],[297,838],[313,840],[330,844],
    [346,854],[379,854],[396,846],[429,833],[462,837],[495,843],[528,844],[544,850],[561,870],[577,895],[594,915],
    [610,937],[627,960],[643,970],[660,969],[676,935],[693,904],[710,873]])
];
document.getElementById('stoch').innerHTML =
  `<polyline points="${kLine.join(' ')}" stroke="#3f97f5"/><polyline points="${dLine.join(' ')}" stroke="#f07d1e"/>`;

// axis labels
const prices = [['0.07500',233],['0.07000',278],['0.06500',324],['0.06000',370],['0.05500',416],['0.05000',462],
  ['0.04500',508],['0.04000',554],['0.02500',691],['0.02000',737],['0.01500',783],['100.00',818],['0.00',884]];
const dates = [['6',45],['2020',131],['13',197],['Feb',301],['17',389],['Mar',460],['16',543],['Apr',631],
  ['13',697],['May',796],['18',890],['Jun',967],['15',1044]];

document.getElementById('axis').innerHTML =
  prices.map(([t, y]) => `<path d="M1114 ${y - .5}h4" stroke="#777"/><text class="axis-text" x="1120" y="${y + 4}">${t}</text>`).join('') +
  dates.map(([t, x]) => `<path d="M${x - .5} 891v4" stroke="#999"/><text class="axis-text axis-mid${t === '2020' ? ' axis-bold' : ''}" x="${x}" y="914">${t}</text>`).join('');
```
